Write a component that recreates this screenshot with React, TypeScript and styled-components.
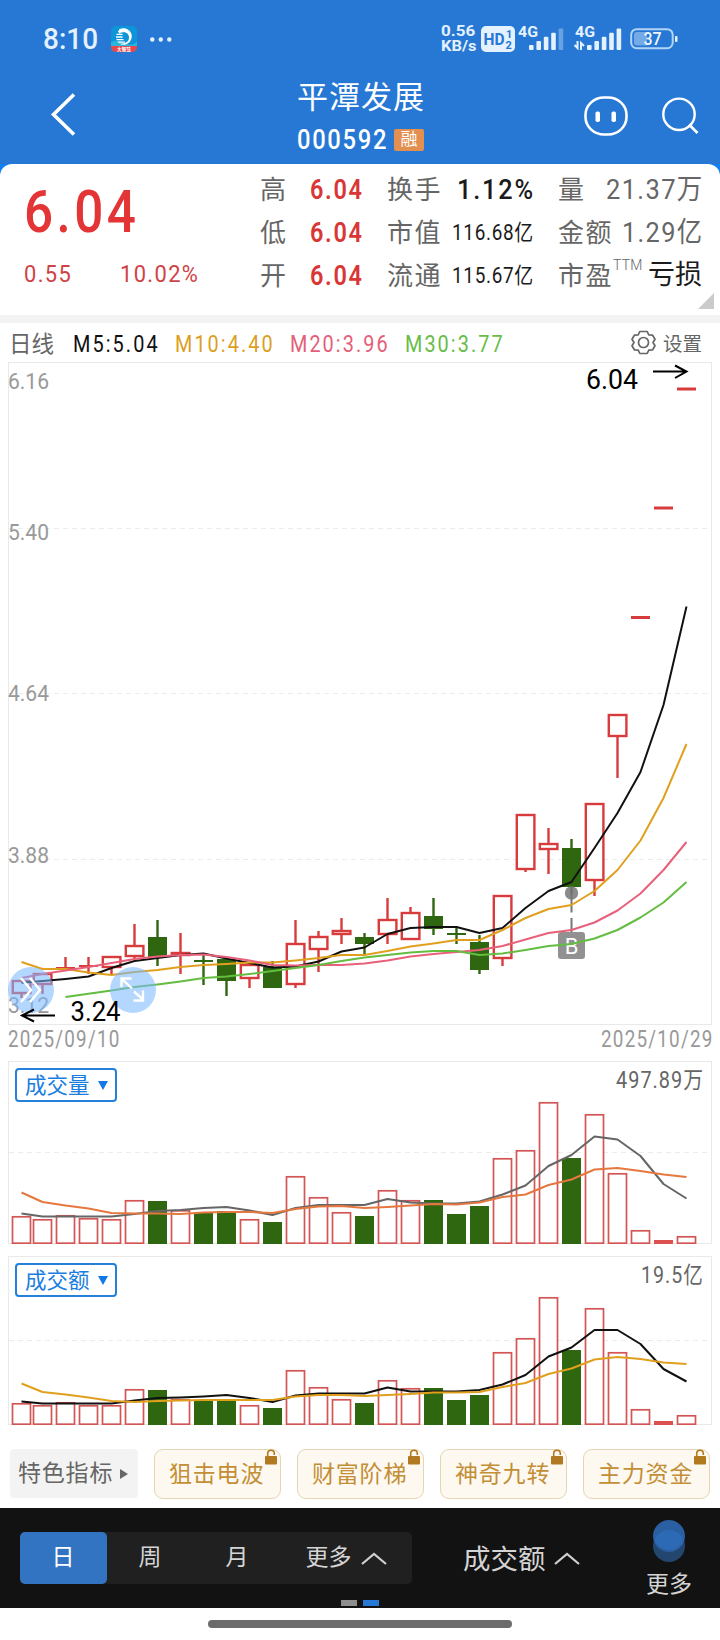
import React, { useLayoutEffect, useRef, useState } from "react";
import styled, { createGlobalStyle } from "styled-components";

const Global = createGlobalStyle`
  * { box-sizing: border-box; }
  body { margin: 0; background: #fff; font-family: Roboto, "Noto Sans CJK SC", sans-serif; }
`;

/* ---------- figures: text fitted to a given column width ---------- */

const FitBox = styled.span<{ $w: number; $size: number; $color?: string; $weight?: number }>`
  display: block;
  flex: none;
  width: ${(p) => p.$w}px;
  height: ${(p) => p.$size}px;
  line-height: ${(p) => p.$size}px;
  font-size: ${(p) => p.$size}px;
  font-weight: ${(p) => p.$weight ?? 400};
  color: ${(p) => p.$color ?? "inherit"};
  white-space: nowrap;
`;
const FitInner = styled.span<{ $track: number }>`
  display: inline-block;
  letter-spacing: ${(p) => p.$track}px;
  transform-origin: 0 50%;
`;

type FitProps = { w: number; size: number; color?: string; weight?: number; track?: number; children: React.ReactNode };
function Fit({ w, size, color, weight, track = 0, children }: FitProps) {
  const ref = useRef<HTMLSpanElement>(null);
  const [scale, setScale] = useState(1);
  useLayoutEffect(() => {
    if (ref.current) setScale(w / (ref.current.offsetWidth - track));
  }, [w, size, weight, track]);
  return (
    <FitBox $w={w} $size={size} $color={color} $weight={weight}>
      <FitInner ref={ref} $track={track} style={{ transform: `scaleX(${scale})` }}>
        {children}
      </FitInner>
    </FitBox>
  );
}

/* ---------- header ---------- */

const Page = styled.div`
  width: 720px;
  height: 1640px;
  display: flex;
  flex-direction: column;
  background: #fff;
  overflow: hidden;
`;
const Header = styled.header`
  height: 164px;
  background: #2678d4;
  color: #fff;
`;
const StatusBar = styled.div`
  height: 78px;
  padding: 0 42px 0 43px;
  display: flex;
  align-items: center;
  color: #e4f1ff;
`;
const AppIcon = styled.svg`
  margin: 0 13px 0 13px;
`;
const Spacer = styled.div`
  flex: 1;
`;
const NetSpeed = styled.div`
  display: flex;
  flex-direction: column;
  margin-right: 5px;
`;
const StatusGlyph = styled.svg<{ $gap: number }>`
  margin-right: ${(p) => p.$gap}px;
  overflow: visible;
`;
const TitleBar = styled.div`
  height: 86px;
  padding: 0 21px 0 50px;
  display: grid;
  grid-template-columns: 180px 1fr 180px;
`;
const BackIcon = styled.svg`
  margin-top: 14px;
`;
const TitleBlock = styled.div`
  display: flex;
  flex-direction: column;
  padding: 2px 0 0 67px;
`;
const StockName = styled.h1`
  margin: 0;
  font-size: 31px;
  line-height: 36px;
  letter-spacing: 1px;
  font-weight: 400;
`;
const CodeRow = styled.div`
  display: flex;
  align-items: center;
  gap: 8px;
  margin-top: 12px;
  height: 24px;
`;
const MarginBadge = styled.span`
  width: 30px;
  height: 22px;
  border-radius: 2px;
  background: #e28f50;
  font-size: 17px;
  line-height: 21px;
  text-align: center;
`;
const Actions = styled.div`
  display: flex;
  justify-content: flex-end;
  gap: 34px;
  padding-top: 18px;
`;

/* ---------- quote ---------- */

const QuoteBack = styled.div`
  background: #0d80f5;
`;
const Quote = styled.section`
  position: relative;
  height: 151px;
  border-radius: 12px 12px 0 0;
  background: #fff;
  display: flex;
  padding: 0 0 0 24px;
`;
const PriceBlock = styled.div`
  width: 236px;
  padding-top: 18px;
  color: #e33436;
`;
const ChangeRow = styled.div`
  display: flex;
  gap: 49px;
  margin-top: 20px;
`;
const Stats = styled.div`
  display: grid;
  grid-template-columns: 102px 146px 144px;
  grid-auto-rows: 43px;
  column-gap: 25px;
  padding-top: 4px;
`;
const Stat = styled.div`
  display: flex;
  align-items: center;
  justify-content: space-between;
`;
const StatLabel = styled.span`
  display: flex;
  font-size: 26px;
  line-height: 38px;
  letter-spacing: 1.5px;
  color: #666;
  white-space: nowrap;
  sup {
    font-size: 14px;
    line-height: 18px;
    letter-spacing: 0.2px;
    font-weight: 300;
    margin-top: -1px;
  }
`;
const Corner = styled.svg`
  position: absolute;
  right: 6px;
  bottom: 6px;
`;
const Divider = styled.div`
  height: 8px;
  background: #f3f3f3;
`;

/* ---------- moving averages ---------- */

const MaRow = styled.div`
  height: 39px;
  display: flex;
  align-items: center;
  padding: 2px 18px 0 9px;
`;
const MaLabel = styled.span`
  width: 64px;
  font-size: 22.5px;
  color: #666;
  margin-top: -3px;
`;
const MaValues = styled.div`
  display: flex;
  gap: 17px;
`;
const Settings = styled.div`
  margin-left: auto;
  display: flex;
  align-items: center;
  gap: 7px;
  margin-top: -3px;
  font-size: 19.5px;
  color: #666;
  svg { margin-top: 1px; }
`;

/* ---------- charts ---------- */

const ChartSvg = styled.svg`
  display: block;
  margin-left: 8px;
`;
const Dates = styled.div`
  height: 36px;
  padding: 3px 8px 0 8px;
  display: flex;
  justify-content: space-between;
  align-items: flex-start;
`;
const Panel = styled.section<{ $gap: number }>`
  position: relative;
  margin-bottom: ${(p) => p.$gap}px;
`;
const PanelHead = styled.div`
  position: absolute;
  top: 7px;
  left: 15px;
  right: 17px;
  display: flex;
  justify-content: space-between;
  align-items: flex-start;
`;
const PanelMax = styled.div`
  padding-top: 1px;
`;
const Indicator = styled.button`
  width: 102px;
  height: 34px;
  border: 2px solid #2480d8;
  border-radius: 4px;
  background: #fff;
  padding: 1px 7px 0 8px;
  display: flex;
  align-items: center;
  justify-content: space-between;
  font: 21.5px/28px Roboto, "Noto Sans CJK SC", sans-serif;
  color: #1a7de0;
`;

/* ---------- special indicators ---------- */

const Specials = styled.div`
  display: flex;
  height: 83px;
  padding: 24px 10px 0;
  gap: 16px;
`;
const SpecialHead = styled.div`
  width: 128px;
  height: 49px;
  border-radius: 4px;
  background: #f3f3f3;
  color: #666;
  font-size: 23px;
  line-height: 50px;
  letter-spacing: 0.8px;
  padding-left: 8px;
  display: flex;
  align-items: center;
  gap: 7px;
`;
const SpecialChip = styled.div`
  position: relative;
  width: 127px;
  height: 50px;
  border: 1px solid #e5d6b3;
  border-radius: 9px;
  background: #fdf9f1;
  color: #c38e35;
  font-size: 23px;
  line-height: 50px;
  letter-spacing: 0.8px;
  padding-left: 14px;
  white-space: nowrap;
`;
const Lock = styled.svg`
  position: absolute;
  right: 3px;
  top: -1px;
`;

/* ---------- bottom bar ---------- */

const BottomBar = styled.nav`
  position: relative;
  height: 100px;
  background: #121212;
  color: #d4d4d4;
  display: flex;
  align-items: flex-start;
  padding-left: 20px;
`;
const Segments = styled.div`
  margin-top: 24px;
  width: 392px;
  height: 52px;
  border-radius: 5px;
  background: #202020;
  display: flex;
`;
const Segment = styled.div<{ $active?: boolean; $grow?: boolean }>`
  width: ${(p) => (p.$grow ? 131 : 87)}px;
  height: 52px;
  border-radius: 5px;
  background: ${(p) => (p.$active ? "#3274c2" : "transparent")};
  color: ${(p) => (p.$active ? "#fff" : "inherit")};
  display: flex;
  align-items: center;
  justify-content: center;
  gap: 9px;
  font-size: 23px;
  line-height: 52px;
  padding: 0 1px 0 0;
`;
const Metric = styled.div`
  margin: 23px 0 0 51px;
  height: 52px;
  width: 183px;
  display: flex;
  align-items: center;
  gap: 8px;
  font-size: 27.5px;
  svg { margin-top: 3px; }
`;
const More = styled.div`
  width: 46px;
  padding-top: 12px;
  display: flex;
  flex-direction: column;
  align-items: center;
  font-size: 23px;
  line-height: 34px;
  gap: 6px;
`;
const Pager = styled.div`
  position: absolute;
  left: 341px;
  bottom: 2px;
  display: flex;
  gap: 6px;
`;
const PageMark = styled.i<{ $on?: boolean }>`
  width: 16px;
  height: 6px;
  background: ${(p) => (p.$on ? "#2678d4" : "#8e8e8e")};
`;
const HomeArea = styled.footer`
  height: 32px;
  padding-top: 12px;
  display: flex;
  justify-content: center;
`;
const HomeBar = styled.div`
  width: 304px;
  height: 8px;
  border-radius: 4px;
  background: #6b6b6b;
`;

/* ---------- data ---------- */

const RED = "#d83b3b";
const GREEN = "#2f6610";
const COUNT = 30;
const xAt = (i: number) => (i === 0 ? 21.5 : 686.5 - 23 * (COUNT - 1 - i));

// wick top, body top, body bottom, wick bottom, falling
type Candle = [number, number, number, number, boolean?];
const CANDLES: Candle[] = [
  [980, 980, 994, 998], [973, 973, 985, 994], [957, 967, 969, 969], [957, 965, 967, 974],
  [956, 956, 968, 974], [924, 945, 957, 958], [920, 937, 957, 966, true], [933, 952, 956, 974],
  [955, 960, 962, 985, true], [959, 959, 981, 996, true], [964, 964, 979, 988], [961, 967, 988, 988, true],
  [920, 943, 985, 988], [931, 936, 950, 972], [918, 930, 935, 944], [933, 937, 944, 954, true],
  [898, 919, 935, 944], [907, 912, 940, 940], [898, 916, 929, 935, true], [926, 933, 935, 944, true],
  [935, 942, 970, 974, true], [895, 895, 959, 966], [814, 814, 870, 872], [828, 843, 850, 874],
  [839, 848, 887, 894, true], [803, 803, 881, 896], [714, 714, 737, 778], [616, 616, 619, 619],
  [506.5, 506.5, 509.5, 509.5], [387.5, 387.5, 390.5, 390.5],
];
const M5 = [982.7, 981, 979, 976.5, 968, 961, 958, 955, 953.5, 958.5, 963, 967.5, 966.5, 961.5, 951.5, 947.5, 934, 928, 927, 927, 933, 928, 908, 891, 882, 848, 813, 772, 705, 606.5];
const M10 = [962, 969, 969, 972.5, 975, 972, 970, 967, 965, 964, 962.5, 962.5, 960.5, 958, 955, 955, 951, 946.5, 943.5, 940, 940, 930, 918, 909, 905, 891, 870, 840.5, 798, 744];
const M20 = [978, 974, 970.5, 967, 963, 959, 956.5, 955, 954.5, 957, 960.5, 965, 965.5, 965, 965, 963.5, 960.5, 956.5, 954, 952, 950, 946, 939.5, 933, 930, 922.5, 910.5, 893.5, 870, 842];
const M30 = [997, 993.7, 990.5, 987, 984.5, 981.5, 978, 976.5, 974, 971, 968, 965, 961, 957.5, 955, 952.5, 951, 951, 955, 953.5, 950, 946, 944, 938.5, 930, 917.5, 902.5, 882];

const VOL = [1216, 1219, 1215, 1218, 1219, 1200, 1201, 1210, 1213, 1211, 1219, 1222, 1176, 1197, 1212, 1216, 1190, 1200, 1200, 1214, 1206, 1158, 1150, 1102, 1158, 1114, 1173, 1230, 1240, 1236];
const VOL5 = [1213.5, 1216.5, 1216.5, 1216.5, 1216.5, 1214, 1211, 1210, 1208, 1207, 1210.5, 1215, 1208, 1205, 1205, 1205, 1199, 1202.5, 1203.5, 1203.5, 1201.5, 1194.5, 1185.5, 1166, 1155, 1136.5, 1139.5, 1156, 1184, 1198.5];
const VOL10 = [1192.5, 1202, 1205.5, 1208.5, 1213, 1213.5, 1213.5, 1214, 1212.5, 1212, 1212, 1213, 1209, 1206.5, 1206, 1208, 1207, 1205.5, 1204, 1204.5, 1202.5, 1197, 1194.5, 1185, 1179.5, 1169.5, 1168, 1171, 1174.5, 1177];
const AMT = [1403, 1405, 1402, 1405, 1405, 1389, 1390, 1399, 1401, 1400, 1405, 1408, 1370, 1387, 1399, 1403, 1380, 1388, 1388, 1400, 1395, 1352, 1338, 1297, 1350, 1308, 1352, 1409, 1421, 1415];
const AMT5 = [1401.5, 1403.5, 1403.5, 1403.5, 1403.5, 1400.5, 1398, 1397.5, 1396.5, 1395, 1398, 1402, 1395.5, 1393.5, 1393.5, 1393.5, 1387.5, 1391.5, 1391.5, 1391.5, 1390, 1384.5, 1375, 1356.5, 1347.5, 1330, 1330, 1344, 1369, 1381.5];
const AMT10 = [1383.5, 1392, 1394.5, 1397.5, 1401, 1402, 1401, 1400.5, 1400, 1400, 1400, 1400, 1396.5, 1395, 1395, 1396, 1395, 1394, 1392.5, 1392.5, 1392, 1387, 1383, 1374, 1368.5, 1359.5, 1357, 1359, 1362.5, 1364];

const points = (ys: number[]) =>
  ys.map((y, k) => `${xAt(k + COUNT - ys.length)},${y}`).join(" ");

function Line({ ys, color }: { ys: number[]; color: string }) {
  return <polyline points={points(ys)} fill="none" stroke={color} strokeWidth={2} strokeLinejoin="round" />;
}

function Frame({ top, bottom, grid }: { top: number; bottom: number; grid: number[] }) {
  return (
    <g fill="none" stroke="#e9e9e9">
      <rect x={8.5} y={top + 0.5} width={703} height={bottom - top - 1} />
      {grid.map((y) => (
        <line key={y} x1={9} x2={711} y1={y} y2={y} strokeDasharray="5 4" stroke="#ececec" />
      ))}
    </g>
  );
}

function CandleShape({ c, x }: { c: Candle; x: number }) {
  const [hi, top, bot, lo, down] = c;
  const color = down ? GREEN : RED;
  const h = bot - top;
  return (
    <g>
      {hi < top && <line x1={x} x2={x} y1={hi} y2={top} stroke={color} strokeWidth={2.4} />}
      {lo > bot && <line x1={x} x2={x} y1={bot} y2={lo} stroke={color} strokeWidth={2.4} />}
      {down || h < 4 ? (
        <rect x={x - 9.5} y={top} width={19} height={Math.max(2, h)} fill={color} />
      ) : (
        <rect x={x - 8.7} y={top + 1} width={17.6} height={h - 2} fill="#fff" stroke={color} strokeWidth={2.4} />
      )}
    </g>
  );
}

const PRICE_LABELS: [string, number][] = [["6.16", 389], ["5.40", 540], ["4.64", 701], ["3.88", 862.5], ["3.12", 1013]];

function PriceChart() {
  return (
    <ChartSvg width={704} height={663} viewBox="8 362 704 663">
      <Frame top={362} bottom={1025} grid={[528.5, 693.5, 859.5]} />
      {PRICE_LABELS.map(([t, y]) => (
        <text key={t} x={8} y={y} fontSize={22.5} fill="#999" textLength={41} lengthAdjust="spacingAndGlyphs">{t}</text>
      ))}
      {CANDLES.map((c, i) => <CandleShape key={i} c={c} x={xAt(i)} />)}

      <circle cx={571.5} cy={893} r={6.7} fill="#777" fillOpacity={0.85} />
      <path d="M571.5 893v19.500M571.5 918v14" stroke="#777" strokeWidth={2} />
      <rect x={558} y={932} width={27} height={27} rx={3} fill="#919191" />
      <text x={571.5} y={953.500} fontSize={22} fill="#fff" textAnchor="middle">B</text>

      <Line ys={M5} color="#111" />
      <Line ys={M10} color="#e0a01e" />
      <Line ys={M20} color="#e8607a" />
      <Line ys={M30} color="#63bd40" />

      <g fill="#7ab8ff" fillOpacity={0.56}>
        <circle cx={31} cy={990} r={23} />
        <circle cx={133} cy={990} r={23} />
      </g>
      <g fill="none" stroke="#fff" strokeWidth={2.4}>
        <path d="M21 978l10 12-10 12M30 978l10 12-10 12" />
        <path d="M121.500 987v-8.500h10M122 979l10 9.500M134 991.500l9.500 8.500M133.500 1000.500h9.500v-10" />
      </g>
      <g fill="none" stroke="#000" strokeWidth={2}>
        <path d="M653 371.500h33M675 365.500l11.500 6L675 378" />
        <path d="M55 1015.500H22M34 1009.500l-12 6 12 6" />
      </g>
      <g fontSize={27} fill="#000">
        <text x={586} y={388.800} textLength={52} lengthAdjust="spacingAndGlyphs">6.04</text>
        <text x={70.500} y={1021} textLength={50} lengthAdjust="spacingAndGlyphs">3.24</text>
      </g>
    </ChartSvg>
  );
}

type BarsProps = { top: number; bottom: number; mid: number; tops: number[]; fast: number[]; slow: number[]; fastColor: string; slowColor: string };
function BarChart({ top, bottom, mid, tops, fast, slow, fastColor, slowColor }: BarsProps) {
  return (
    <ChartSvg width={704} height={bottom - top} viewBox={`8 ${top} 704 ${bottom - top}`}>
      <Frame top={top} bottom={bottom} grid={[mid]} />
      {tops.map((y, i) => {
        const x = xAt(i);
        if (CANDLES[i][4]) return <rect key={i} x={x - 9.5} y={y} width={19} height={bottom - y} fill={GREEN} />;
        if (bottom - y < 5) return <rect key={i} x={x - 9.5} y={y} width={19} height={bottom - y} fill="#dc5050" />;
        return <rect key={i} x={x - 9} y={y + 0.8} width={18} height={bottom - y - 1.6} fill="#fff" stroke="#d35555" strokeWidth={1.7} />;
      })}
      <Line ys={fast} color={fastColor} />
      <Line ys={slow} color={slowColor} />
    </ChartSvg>
  );
}

function IndicatorButton({ children }: { children: React.ReactNode }) {
  return (
    <Indicator>
      {children}
      <svg width={10} height={9} viewBox="0 0 10 9"><path d="M0 0h10L5 9z" fill="#1279e6" /></svg>
    </Indicator>
  );
}

function Chevron() {
  return (
    <svg width={26} height={13} viewBox="0 0 26 13">
      <path d="M1 12L13 2l12 10" fill="none" stroke="#d0d0d0" strokeWidth={2.2} />
    </svg>
  );
}

function Signal({ last }: { last: number }) {
  return (
    <g>
      {[0, 1, 2, 3, 4].map((k) => (
        <rect key={k} x={k * 7.4} y={17 - k * 4.1} width={4.6} height={5 + k * 4.1} rx={1} fill="#e4f1ff" fillOpacity={k === 4 ? last : 1} />
      ))}
    </g>
  );
}

type StatItem = { label: React.ReactNode; value: string; w: number; size: number; color: string; weight: number; track: number };
const STATS: StatItem[] = [
  { label: "高", value: "6.04", w: 52, size: 28, color: "#d93636", weight: 600, track: 2 },
  { label: "换手", value: "1.12%", w: 76, size: 28, color: "#1b1b1b", weight: 500, track: 2 },
  { label: "量", value: "21.37万", w: 96, size: 28, color: "#666", weight: 400, track: 1.5 },
  { label: "低", value: "6.04", w: 52, size: 28, color: "#d93636", weight: 600, track: 2 },
  { label: "市值", value: "116.68亿", w: 81, size: 22, color: "#1b1b1b", weight: 400, track: 0.8 },
  { label: "金额", value: "1.29亿", w: 80, size: 28, color: "#666", weight: 400, track: 1.5 },
  { label: "开", value: "6.04", w: 52, size: 28, color: "#d93636", weight: 600, track: 2 },
  { label: "流通", value: "115.67亿", w: 81, size: 22, color: "#1b1b1b", weight: 400, track: 0.8 },
  { label: <>市盈<sup>TTM</sup></>, value: "亏损", w: 54, size: 27, color: "#1b1b1b", weight: 400, track: 0 },
];

const GEAR = "M8.300 1.500h7.400l1.600 3.400 3.800.3 2.400 4-2 3.300 2 3.300-2.400 4-3.800.3-1.600 3.400H8.300l-1.600-3.400-3.800-.3-2.400-4 2-3.300-2-3.300 2.400-4 3.800-.3z";

export default function App() {
  return (
    <Page>
      <Global />
      <Header>
        <StatusBar>
          <Fit w={55} size={30} weight={500}>8:10</Fit>
          <AppIcon width={26} height={26} viewBox="0 0 26 26">
            <rect width={26} height={26} rx={5} fill="#0e94d8" />
            <path d="M0 16q6-3 13 1t13-1v4H0z" fill="#28b6dc" />
            <path d="M0 20h26v1a5 5 0 0 1-5 5H5a5 5 0 0 1-5-5z" fill="#e8484c" />
            <path d="M8 3.500a8.300 8.300 0 1 1 0 14q6 1 9-2.500c2-3 1-6.500-1.500-8-3-1.800-6-.5-7.500 1z" fill="#fff" />
            <path d="M7 5.500h6M5.500 8.300h6M5 11h6.500M5.500 13.700h7M7 16.200h7" stroke="#fff" strokeWidth={1.300} />
            <text x={13} y={24.800} fontSize={4.600} fontWeight={700} fill="#fff" textAnchor="middle">大智慧</text>
          </AppIcon>
          <svg width={22} height={5} viewBox="0 0 22 5" fill="#e4f1ff">
            <circle cx={2.300} cy={2.500} r={2.200} /><circle cx={10.800} cy={2.500} r={2.200} /><circle cx={19.300} cy={2.500} r={2.200} />
          </svg>
          <Spacer />
          <NetSpeed>
            <Fit w={34} size={15} weight={700}>0.56</Fit>
            <Fit w={35} size={15} weight={700}>KB/s</Fit>
          </NetSpeed>
          <StatusGlyph $gap={3} width={34} height={26} viewBox="0 0 34 26">
            <rect width={34} height={26} rx={5} fill="#e4f1ff" />
            <g fill="#2678d4" fontWeight={700}>
              <text x={2.500} y={18.500} fontSize={16} textLength={21} lengthAdjust="spacingAndGlyphs">HD</text>
              <text x={25} y={12} fontSize={11}>1</text>
              <text x={24.500} y={22.500} fontSize={11}>2</text>
            </g>
          </StatusGlyph>
          <StatusGlyph $gap={10} width={46} height={26} viewBox="0 0 46 26">
            <text x={0} y={11} fontSize={15} fontWeight={700} fill="#e4f1ff" textLength={20} lengthAdjust="spacingAndGlyphs">4G</text>
            <g transform="translate(11 2)"><Signal last={0.35} /></g>
          </StatusGlyph>
          <StatusGlyph $gap={9} width={47} height={26} viewBox="0 0 47 26">
            <text x={1} y={11} fontSize={15} fontWeight={700} fill="#e4f1ff" textLength={20} lengthAdjust="spacingAndGlyphs">4G</text>
            <path d="M3.500 15v7l-3-3M7 24v-7l3 3" stroke="#e4f1ff" strokeWidth={2} fill="none" />
            <g transform="translate(13 2)"><Signal last={1} /></g>
          </StatusGlyph>
          <svg width={48} height={22} viewBox="0 0 48 22">
            <rect x={1.200} y={1.200} width={41.500} height={19} rx={5.500} fill="none" stroke="#b4d4f5" strokeWidth={2} />
            <path d="M7 4h10v13.500H7a3 3 0 0 1-3-3V7a3 3 0 0 1 3-3z" fill="#74aae6" />
            <rect x={45} y={8} width={2.500} height={6} rx={1} fill="#e4f1ff" />
            <text x={13.500} y={17} fontSize={17.500} fill="#f0f7ff" fontWeight={500} textLength={18} lengthAdjust="spacingAndGlyphs">37</text>
          </svg>
        </StatusBar>
        <TitleBar>
          <BackIcon width={26} height={46} viewBox="0 0 26 46">
            <path d="M24 2.500L3.500 22.500 24 42.500" fill="none" stroke="#fff" strokeWidth={3.600} />
          </BackIcon>
          <TitleBlock>
            <StockName>平潭发展</StockName>
            <CodeRow>
              <Fit w={89} size={28} weight={500} track={2}>000592</Fit>
              <MarginBadge>融</MarginBadge>
            </CodeRow>
          </TitleBlock>
          <Actions>
            <svg width={44} height={40} viewBox="0 0 44 40">
              <rect x={1.500} y={1.500} width={41} height={37} rx={18.500} ry={17.500} fill="none" stroke="#fff" strokeWidth={2.600} />
              <rect x={11.500} y={15.500} width={4.500} height={10.500} rx={1.800} fill="#fff" />
              <rect x={27.500} y={15.500} width={4.500} height={10.500} rx={1.800} fill="#fff" />
            </svg>
            <svg width={37} height={38} viewBox="0 0 37 38">
              <circle cx={17} cy={18.300} r={15.700} fill="none" stroke="#fff" strokeWidth={2.400} />
              <path d="M27 28.500l8.500 8.500" stroke="#fff" strokeWidth={2.600} />
            </svg>
          </Actions>
        </TitleBar>
      </Header>

      <QuoteBack>
        <Quote>
          <PriceBlock>
            <Fit w={112} size={60} weight={500} track={4}>6.04</Fit>
            <ChangeRow>
              <Fit w={47} size={24} color="#cf4346" track={1.5}>0.55</Fit>
              <Fit w={78} size={24} color="#cf4346" track={1.5}>10.02%</Fit>
            </ChangeRow>
          </PriceBlock>
          <Stats>
            {STATS.map((s, i) => (
              <Stat key={i}>
                <StatLabel>{s.label}</StatLabel>
                <Fit w={s.w} size={s.size} color={s.color} weight={s.weight} track={s.track}>{s.value}</Fit>
              </Stat>
            ))}
          </Stats>
          <Corner width={16} height={16} viewBox="0 0 16 16"><path d="M16 0v16H0z" fill="#cbcbcb" /></Corner>
        </Quote>
      </QuoteBack>
      <Divider />

      <MaRow>
        <MaLabel>日线</MaLabel>
        <MaValues>
          <Fit w={85} size={24} color="#111" track={2.5}>M5:5.04</Fit>
          <Fit w={98} size={24} color="#dba01f" track={2.5}>M10:4.40</Fit>
          <Fit w={98} size={24} color="#e4607a" track={2.5}>M20:3.96</Fit>
          <Fit w={98} size={24} color="#68bd48" track={2.5}>M30:3.77</Fit>
        </MaValues>
        <Settings>
          <svg width={25} height={25} viewBox="0 0 24 25">
            <path d={GEAR} fill="none" stroke="#666" strokeWidth={1.700} strokeLinejoin="round" />
            <circle cx={12} cy={12.500} r={5} fill="none" stroke="#666" strokeWidth={1.700} />
          </svg>
          设置
        </Settings>
      </MaRow>

      <PriceChart />
      <Dates>
        <Fit w={111} size={23} color="#999" track={1.5}>2025/09/10</Fit>
        <Fit w={111} size={23} color="#999" track={1.5}>2025/10/29</Fit>
      </Dates>

      <Panel $gap={12}>
        <BarChart top={1061} bottom={1244} mid={1152.5} tops={VOL} fast={VOL5} slow={VOL10} fastColor="#666" slowColor="#e5783f" />
        <PanelHead>
          <IndicatorButton>成交量</IndicatorButton>
          <PanelMax><Fit w={87} size={23} color="#666" track={1.2}>497.89万</Fit></PanelMax>
        </PanelHead>
      </Panel>
      <Panel $gap={0}>
        <BarChart top={1256} bottom={1425} mid={1340.5} tops={AMT} fast={AMT5} slow={AMT10} fastColor="#111" slowColor="#e0a01e" />
        <PanelHead>
          <IndicatorButton>成交额</IndicatorButton>
          <PanelMax><Fit w={62} size={23} color="#666" track={1.2}>19.5亿</Fit></PanelMax>
        </PanelHead>
      </Panel>

      <Specials>
        <SpecialHead>
          特色指标
          <svg width={8} height={10} viewBox="0 0 8 10"><path d="M0 0l8 5-8 5z" fill="#666" /></svg>
        </SpecialHead>
        {["狙击电波", "财富阶梯", "神奇九转", "主力资金"].map((t) => (
          <SpecialChip key={t}>
            {t}
            <Lock width={12} height={16} viewBox="0 0 12 16">
              <path d="M2.700 8V4.500a3.300 3.300 0 0 1 6.600 0V6" fill="none" stroke="#b17a20" strokeWidth={1.600} />
              <rect y={7} width={12} height={8.500} rx={1} fill="#b17a20" />
            </Lock>
          </SpecialChip>
        ))}
      </Specials>

      <BottomBar>
        <Segments>
          <Segment $active>日</Segment>
          <Segment>周</Segment>
          <Segment>月</Segment>
          <Segment $grow>更多<Chevron /></Segment>
        </Segments>
        <Metric>成交额<Chevron /></Metric>
        <More>
          <svg width={32} height={42} viewBox="0 0 32 42">
            <circle cx={16} cy={26} r={16} fill="#23466f" />
            <circle cx={16} cy={16} r={16} fill="#2a5fa2" />
            <path d="M1.200 20a16 16 0 0 1 29.600 0A16 16 0 0 1 1.200 20z" fill="#2d6ab5" />
          </svg>
          更多
        </More>
        <Pager><PageMark /><PageMark $on /></Pager>
      </BottomBar>
      <HomeArea><HomeBar /></HomeArea>
    </Page>
  );
}
